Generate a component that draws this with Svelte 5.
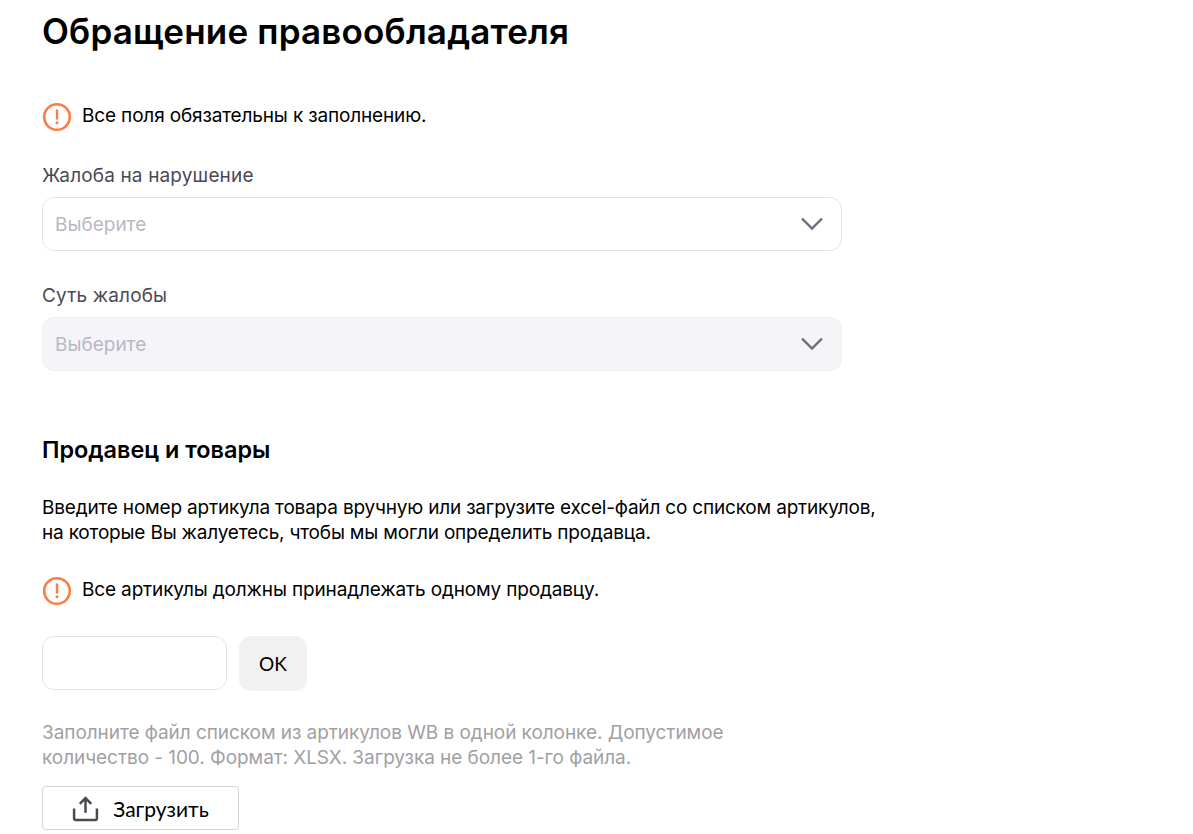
<script>
	const selects = [
		{ label: 'Жалоба на нарушение', disabled: false },
		{ label: 'Суть жалобы', disabled: true }
	];
</script>

{#snippet warning(text)}
	<div class="notice">
		<svg class="notice-icon" width="30" height="30" viewBox="0 0 30 30" fill="none">
			<circle cx="15" cy="15" r="12.8" stroke="#ff7a45" stroke-width="2.6" />
			<path d="M15 8.5v8" stroke="#ff7a45" stroke-width="2.4" stroke-linecap="round" />
			<circle cx="15" cy="20.8" r="1.5" fill="#ff7a45" />
		</svg>
		<span>{text}</span>
	</div>
{/snippet}

<main>
	<h1>Обращение правообладателя</h1>

	{@render warning('Все поля обязательны к заполнению.')}

	{#each selects as select}
		<div class="field">
			<div class="label">{select.label}</div>
			<div class="select" class:disabled={select.disabled}>
				<span>Выберите</span>
				<svg width="24" height="24" viewBox="0 0 24 24" fill="none">
					<path d="M2 6.5l10 10 10-10" stroke="#6d6b80" stroke-width="2.4" />
				</svg>
			</div>
		</div>
	{/each}

	<h2>Продавец и товары</h2>

	<p class="intro">
		Введите номер артикула товара вручную или загрузите excel-файл со списком артикулов,<br />
		на которые Вы жалуетесь, чтобы мы могли определить продавца.
	</p>

	{@render warning('Все артикулы должны принадлежать одному продавцу.')}

	<div class="article-row">
		<input class="article-input" type="text" />
		<button class="ok-btn">OK</button>
	</div>

	<p class="hint">
		Заполните файл списком из артикулов WB в одной колонке. Допустимое<br />
		количество - 100. Формат: XLSX. Загрузка не более 1-го файла.
	</p>

	<button class="upload-btn">
		<svg width="27" height="27" viewBox="0 0 26 26" fill="none">
			<path d="M13 17V3M7.5 8.5L13 3l5.5 5.5" stroke="#4a4a55" stroke-width="2.4" />
			<path d="M2 13v9.5a1.5 1.5 0 0 0 1.5 1.5h19a1.5 1.5 0 0 0 1.5-1.5V13" stroke="#4a4a55" stroke-width="2.4" />
		</svg>
		<span>Загрузить</span>
	</button>
</main>

<style>
	:global(body) {
		background: #ffffff;
	}

	main {
		padding: 0 0 4px 42px;
		font-family: Inter, "Noto Sans", sans-serif;
		color: #000000;
		height: 830px;
		overflow: hidden;
	}

	h1 {
		margin: 0;
		padding-top: 9px;
		font-size: 35px;
		line-height: 44px;
		font-weight: 600;
		letter-spacing: 0.18px;
	}

	h2 {
		margin: 64px 0 0;
		font-size: 23.4px;
		line-height: 30px;
		font-weight: 600;
	}

	.notice {
		display: flex;
		align-items: flex-start;
		gap: 10px;
		font-size: 19px;
		line-height: 26px;
		letter-spacing: -0.15px;
	}

	.notice-icon {
		flex: none;
		margin-top: -1px;
	}

	h1 + .notice {
		margin-top: 50px;
	}

	.field {
		margin-top: 32px;
		width: 800px;
	}

	.notice + .field {
		margin-top: 31px;
	}

	.label {
		font-size: 19px;
		line-height: 26px;
		letter-spacing: 0.15px;
		color: #4a4a55;
		margin-bottom: 8px;
	}

	.select {
		box-sizing: border-box;
		height: 54px;
		padding: 0 17px 0 12px;
		display: flex;
		align-items: center;
		justify-content: space-between;
		border: 1px solid #e4e3ea;
		border-radius: 12px;
		font-size: 19px;
		color: #b9b8c5;
	}

	.select.disabled {
		background: #f5f5f8;
		border-color: #efeff3;
	}

	.intro {
		margin: 30px 0 0;
		font-size: 19px;
		line-height: 25px;
		letter-spacing: -0.19px;
	}

	.intro + .notice {
		margin-top: 32px;
	}

	.article-row {
		display: flex;
		gap: 12px;
		margin-top: 30px;
	}

	.article-input {
		box-sizing: border-box;
		width: 185px;
		height: 54px;
		border: 1px solid #e4e3ea;
		border-radius: 12px;
		background: #ffffff;
	}

	.ok-btn {
		width: 68px;
		height: 55px;
		border: none;
		border-radius: 12px;
		background: #f1f1f1;
		font-family: Lato, Inter, sans-serif;
		font-size: 19px;
		color: #000000;
	}

	.hint {
		margin: 29px 0 0;
		font-size: 19px;
		line-height: 25px;
		letter-spacing: -0.06px;
		color: #a0a0a5;
	}

	.upload-btn {
		box-sizing: border-box;
		margin-top: 16px;
		width: 197px;
		height: 44px;
		display: flex;
		align-items: center;
		justify-content: center;
		gap: 14px;
		border: 1px solid #d4d4da;
		border-radius: 4px;
		background: #ffffff;
		font-family: Lato, Inter, sans-serif;
		font-size: 21px;
		color: #000000;
	}
</style>
